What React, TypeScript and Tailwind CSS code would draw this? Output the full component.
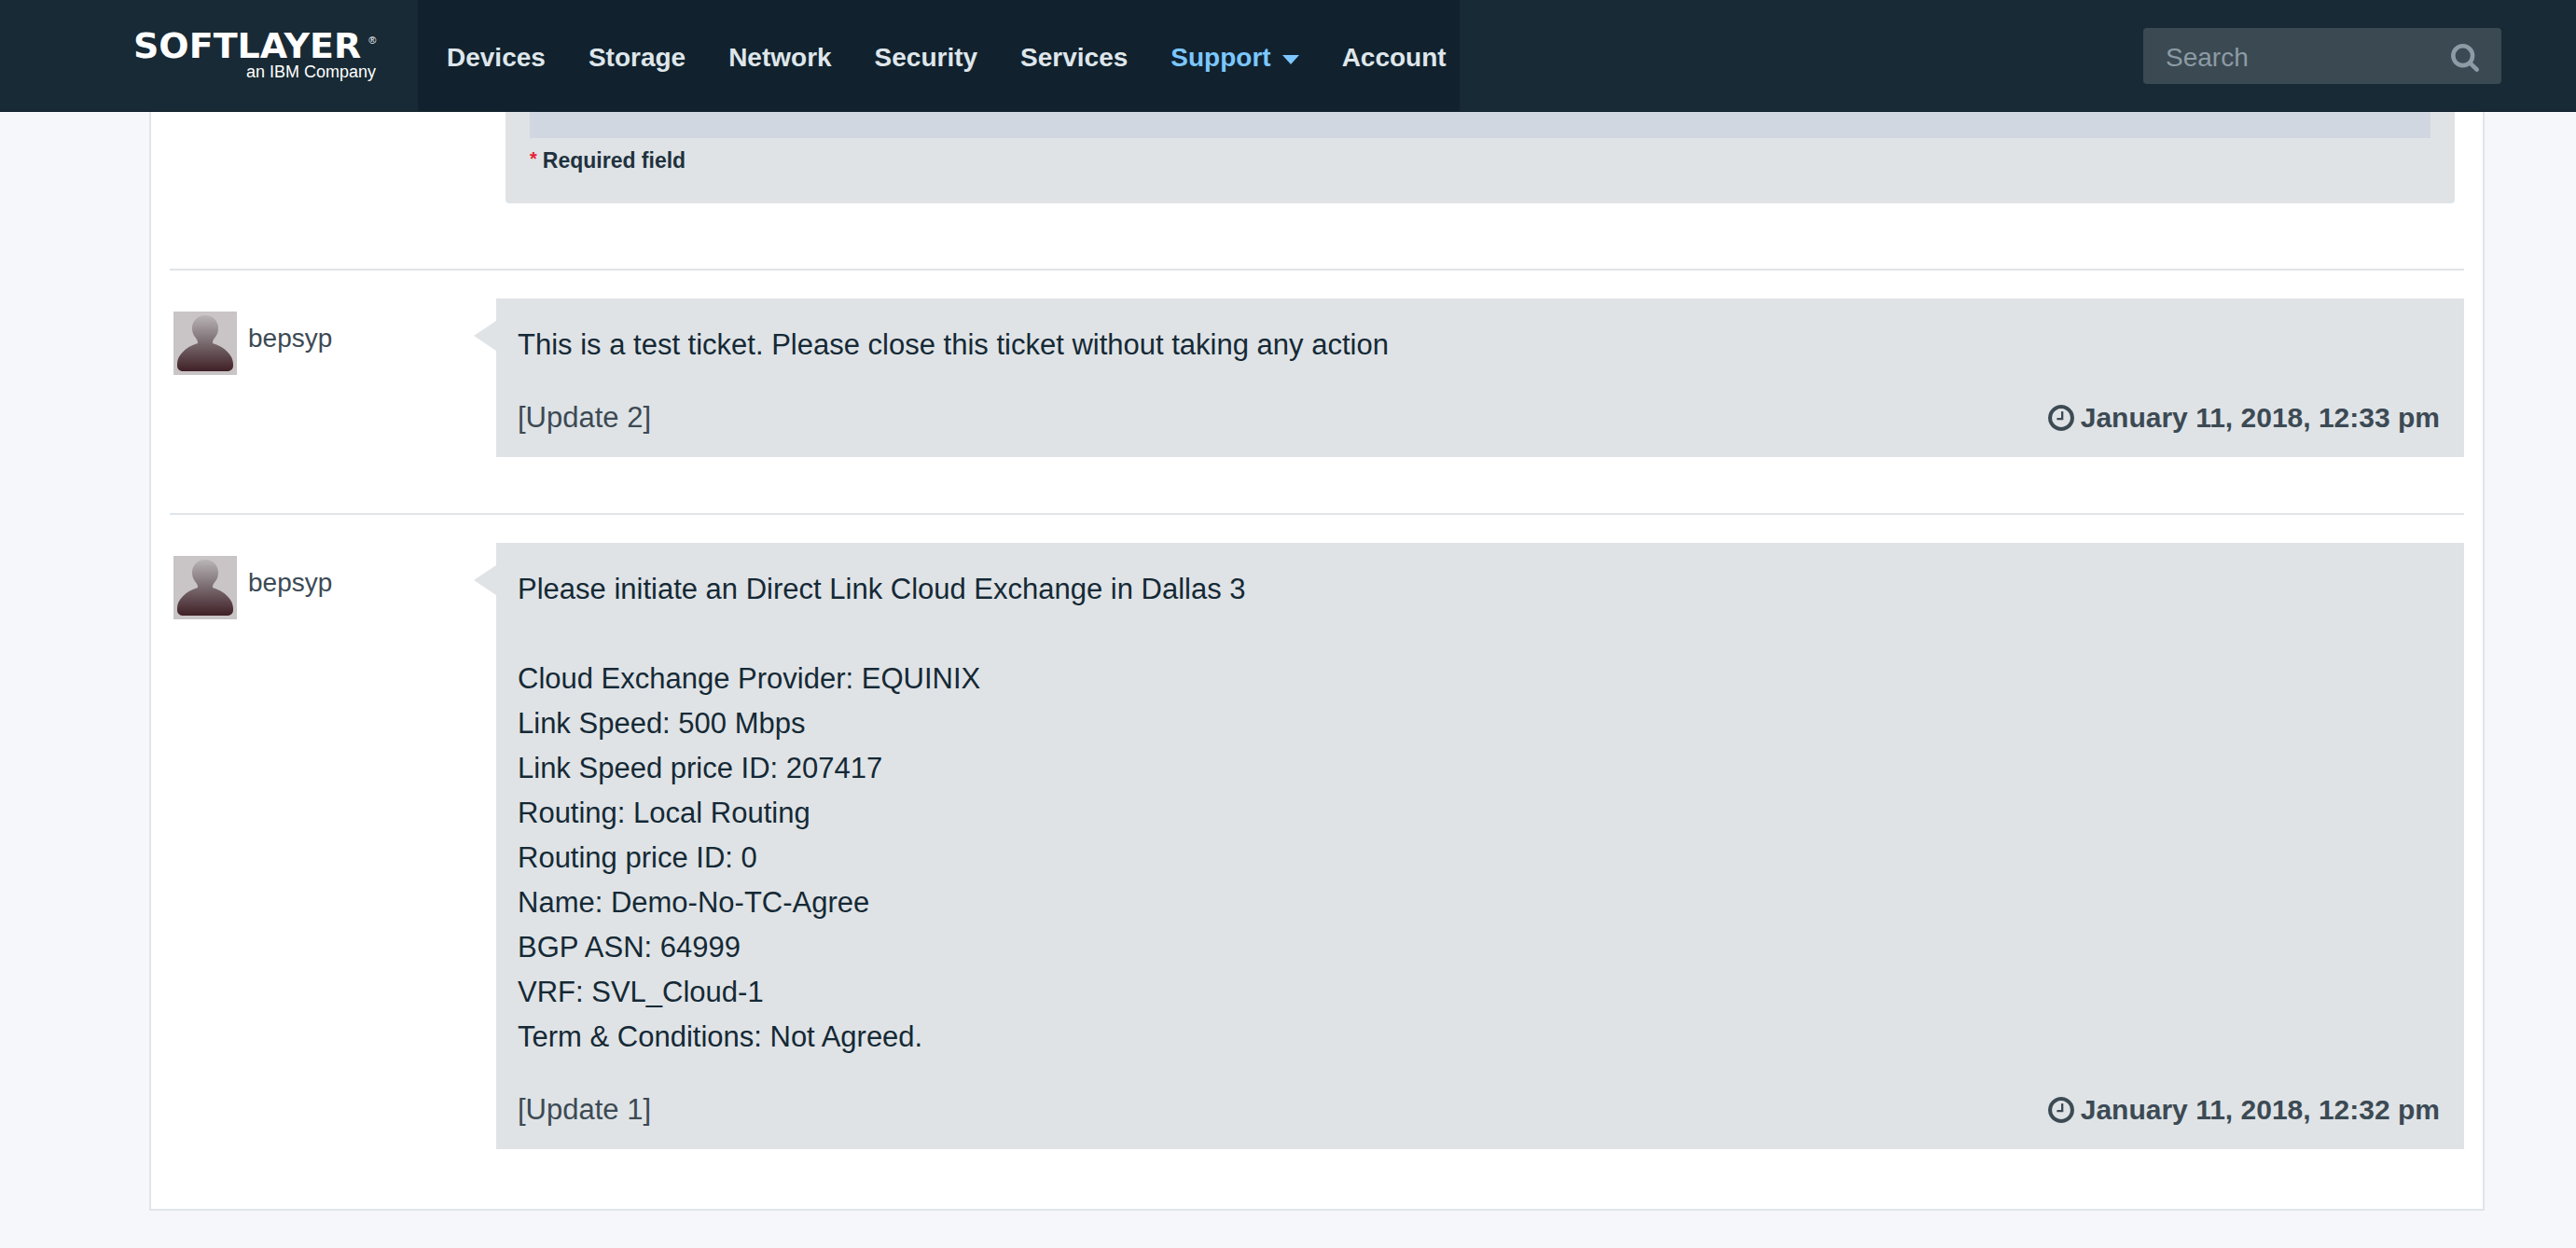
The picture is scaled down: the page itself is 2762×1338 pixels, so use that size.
import React from "react";

const navItems = ["Devices", "Storage", "Network", "Security", "Services", "Support", "Account"];

type Update = { user: string; lines: string[]; label: string; date: string };

const updates: Update[] = [
  {
    user: "bepsyp",
    lines: ["This is a test ticket. Please close this ticket without taking any action"],
    label: "[Update 2]",
    date: "January 11, 2018, 12:33 pm",
  },
  {
    user: "bepsyp",
    lines: [
      "Please initiate an Direct Link Cloud Exchange in Dallas 3",
      "",
      "Cloud Exchange Provider: EQUINIX",
      "Link Speed: 500 Mbps",
      "Link Speed price ID: 207417",
      "Routing: Local Routing",
      "Routing price ID: 0",
      "Name: Demo-No-TC-Agree",
      "BGP ASN: 64999",
      "VRF: SVL_Cloud-1",
      "Term & Conditions: Not Agreed.",
    ],
    label: "[Update 1]",
    date: "January 11, 2018, 12:32 pm",
  },
];

function SearchIcon() {
  return (
    <svg viewBox="64 128 1664 1664" className="size-[30px]" fill="currentColor" aria-hidden="true">
      <path d="M1216 832q0-185-131.5-316.5t-316.5-131.5-316.5 131.5-131.5 316.5 131.5 316.5 316.5 131.5 316.5-131.5 131.5-316.5zm512 832q0 52-38 90t-90 38q-54 0-90-38l-343-342q-179 124-399 124-143 0-273.5-55.5t-225-150-150-225-55.5-273.5 55.5-273.5 150-225 225-150 273.5-55.5 273.5 55.5 225 150 150 225 55.5 273.5q0 220-124 399l343 343q37 37 37 90z" />
    </svg>
  );
}

function ClockIcon() {
  return (
    <svg viewBox="128 128 1536 1536" className="size-7" fill="currentColor" aria-hidden="true">
      <path d="M1024 544v448q0 14-9 23t-23 9h-320q-14 0-23-9t-9-23v-64q0-14 9-23t23-9h224v-352q0-14 9-23t23-9h64q14 0 23 9t9 23zm416 352q0-148-73-273t-198-198-273-73-273 73-198 198-73 273 73 273 198 198 273 73 273-73 198-198 73-273zm224 0q0 209-103 385.5t-279.5 279.5-385.5 103-385.5-103-279.5-279.5-103-385.5 103-385.5 279.5-279.5 385.5-103 385.5 103 279.5 279.5 103 385.5z" />
    </svg>
  );
}

function Avatar({ id }: { id: string }) {
  return (
    <svg viewBox="0 0 68 68" className="size-[68px] shrink-0" aria-hidden="true">
      <defs>
        <linearGradient id={id} x1="0" y1="4" x2="0" y2="64" gradientUnits="userSpaceOnUse">
          <stop offset="0" stopColor="#b9b5b7" />
          <stop offset="0.5" stopColor="#786a6e" />
          <stop offset="1" stopColor="#3f2026" />
        </linearGradient>
      </defs>
      <rect width="68" height="68" fill="#c9c4c6" />
      <path
        fill={`url(#${id})`}
        d="M34 4c-8 0-14 6-14 14 0 5 2 8 4 10.500 1.500 2 2 3 2 5.500C13 38 4 47 4 56v2c0 4 3 6 7 6h46c4 0 7-2 7-6v-2c0-9-9-18-22-22 0-2.500.5-3.500 2-5.500 2-2.500 4-5.500 4-10.500 0-8-6-14-14-14z"
      />
    </svg>
  );
}

function Header() {
  return (
    <header className="flex h-[120px] items-stretch border-b border-[#0f1f29] bg-[#182a35]">
      <a href="#home" className="flex w-[448px] shrink-0 flex-col pt-[31px] pl-[143px] text-white">
        <span className="flex items-start gap-2">
          <span className="font-['DejaVu_Sans'] text-[38px] leading-9 font-bold">SOFTLAYER</span>
          <span className="pt-1 text-[11px] leading-4">®</span>
        </span>
        <span className="w-[260px] text-right text-[18px] leading-5">an IBM Company</span>
      </a>
      <nav className="flex items-center gap-[46px] bg-[#11222e] pt-1 pr-[14px] pl-[31px] text-[28px] leading-10 font-bold text-[#dfe6eb]">
        {navItems.map((item) =>
          item === "Support" ? (
            <a key={item} href="#support" className="flex items-center gap-3 text-[#7cc7ff]">
              {item}
              <svg viewBox="0 0 18 10" className="mt-1 h-[10px] w-[18px]" fill="currentColor" aria-hidden="true">
                <path d="M0 0h18L9 10z" />
              </svg>
            </a>
          ) : (
            <a key={item} href={`#${item.toLowerCase()}`}>
              {item}
            </a>
          ),
        )}
      </nav>
      <form className="mr-20 ml-auto flex h-[60px] w-96 items-center self-center rounded bg-[#3b4a52] pr-6 pl-6 text-[#8c9ba5]">
        <input
          type="search"
          aria-label="Search"
          placeholder="Search"
          className="min-w-0 flex-1 bg-transparent pt-1 text-[28px] leading-10 outline-none placeholder:text-[#8c9ba5]"
        />
        <button type="button" aria-label="Submit search" className="pt-1">
          <SearchIcon />
        </button>
      </form>
    </header>
  );
}

function TicketUpdate({ update, id }: { update: Update; id: string }) {
  return (
    <article className="flex border-t-2 border-[#dfe5ea] pt-[30px]">
      <div className="flex w-[350px] shrink-0 items-start gap-3 pt-[14px] pl-1">
        <Avatar id={id} />
        <span className="pt-[9px] text-[28px] leading-10 text-[#3c4a54]">{update.user}</span>
      </div>
      <div className="relative flex-1 bg-[#dfe3e6] pt-[26px] pr-[26px] pb-[18px] pl-[23px]">
        <svg viewBox="0 0 24 32" className="absolute top-6 right-full h-8 w-6" aria-hidden="true">
          <path d="M24 0v32L0 16z" fill="#dfe3e6" />
        </svg>
        <div className="text-[31px] leading-[48px] text-[#152935]">
          {update.lines.map((line, i) => (
            <p key={i} className="min-h-12">
              {line}
            </p>
          ))}
        </div>
        <footer className="mt-[30px] flex items-center justify-between text-[31px] leading-[48px] text-[#3c4a54]">
          <span>{update.label}</span>
          <span className="flex items-center gap-[7px] text-[30px] font-bold">
            <ClockIcon />
            <time>{update.date}</time>
          </span>
        </footer>
      </div>
    </article>
  );
}

export default function App() {
  return (
    <div className="min-h-screen bg-[#f5f7fb] font-['Liberation_Sans',Arial,sans-serif]">
      <Header />
      <main className="mr-[98px] ml-40 border-x-2 border-b-2 border-[#dfe5ea] bg-white px-5 pb-16">
        <section className="mr-[10px] mb-[70px] ml-[360px] rounded-b bg-[#dfe3e6] px-[26px] pb-[26px]">
          <div className="h-7 bg-[#d0d7e1]" />
          <p className="flex gap-[6px] pt-2 pb-1 text-[23px] leading-8 font-bold text-[#1f323e]">
            <span className="text-[20px] leading-7 text-[#e71d32]">*</span>
            Required field
          </p>
        </section>
        <div className="flex flex-col gap-[60px]">
          {updates.map((update, i) => (
            <TicketUpdate key={update.label} update={update} id={`avatar-${i}`} />
          ))}
        </div>
      </main>
    </div>
  );
}
